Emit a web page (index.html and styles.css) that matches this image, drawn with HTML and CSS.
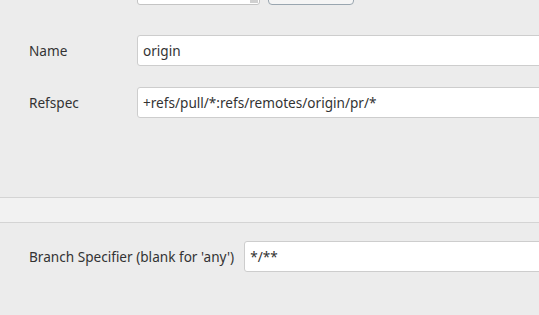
FILE: index.html
```html
<!DOCTYPE html>
<html lang="en">
<head>
    <meta charset="UTF-8">
    <title>Git SCM</title>
    <link rel="stylesheet" href="styles.css">
</head>
<body>
    <div class="page">
        <div class="top-row">
            <div class="select-box"><span class="select-grip"></span></div>
            <div class="top-button"></div>
        </div>

        <div class="field">
            <label class="field-label">Name</label>
            <input class="field-input" type="text" value="origin">
        </div>
        <div class="field">
            <label class="field-label">Refspec</label>
            <input class="field-input" type="text" value="+refs/pull/*:refs/remotes/origin/pr/*">
        </div>

        <div class="divider"></div>

        <div class="field branch">
            <label class="field-label">Branch Specifier (blank for 'any')</label>
            <input class="field-input" type="text" value="*/**">
        </div>
    </div>
</body>
</html>
```

FILE: styles.css
```css
/* Page */
body {
    margin: 0;
    background: #ececec;
    font-family: "Noto Sans", "Open Sans", sans-serif;
    font-size: 13.6px;
    color: #333;
    overflow: hidden;
}

.page {
    width: 560px;
}

/* Cut-off row at the top */
.top-row {
    display: flex;
    align-items: flex-end;
    height: 5px;
    margin-top: -25px;
    padding-top: 25px;
    padding-left: 137px;
}
.select-box {
    position: relative;
    width: 123px;
    height: 28px;
    background: #fff;
    border: 1px solid #c4c4c4;
    border-radius: 3px;
    box-sizing: border-box;
}
.select-grip {
    position: absolute;
    right: 1px;
    bottom: 1px;
    width: 8px;
    height: 8px;
    background: #d0d0d0;
}
.top-button {
    width: 86px;
    height: 28px;
    margin-left: 8px;
    border: 1px solid #9aa6b0;
    border-radius: 4px;
    background: #f5f5f5;
    box-sizing: border-box;
}

/* Form rows */
.field {
    display: flex;
    align-items: center;
    padding-left: 29px;
    margin-top: 30px;
}
.field + .field {
    margin-top: 21px;
}
.field-label {
    width: 108px;
    flex-shrink: 0;
}
.field-input {
    flex: 1;
    height: 31px;
    padding: 0 5px;
    border: 1px solid #cdcdcd;
    border-radius: 3px;
    background: #fff;
    font-family: inherit;
    font-size: 13.6px;
    color: #333;
    box-sizing: border-box;
}

.divider {
    height: 24px;
    margin-top: 79px;
    background: #f2f2f2;
    border-top: 1px solid #d4d4d4;
    border-bottom: 1px solid #d4d4d4;
}

.field.branch {
    margin-top: 18px;
}
.field.branch .field-label {
    width: auto;
    margin-right: 10px;
}
```
